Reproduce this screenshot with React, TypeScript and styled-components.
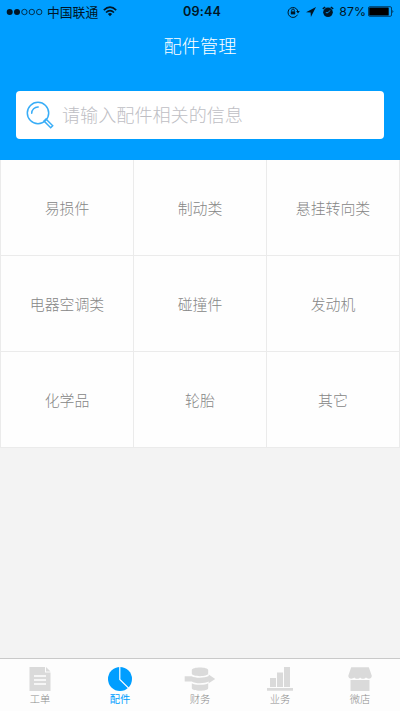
import React from "react";
import styled, { createGlobalStyle } from "styled-components";

const Global = createGlobalStyle`
  * { box-sizing: border-box; }
  body { margin: 0; font-family: "Noto Sans CJK SC", sans-serif; font-weight: 300; }
`;

const Screen = styled.div`
  width: 400px;
  height: 711px;
  display: flex;
  flex-direction: column;
  background: #f3f3f3;
  overflow: hidden;
`;

const Header = styled.header`
  height: 160px;
  flex: none;
  background: #009eff;
`;

const StatusBar = styled.div`
  height: 22px;
  display: grid;
  grid-template-columns: 1fr auto 1fr;
  align-items: center;
  padding: 0 4px 0 6px;
  color: #001626;
  font-size: 13px;
  line-height: 22px;
  svg { display: block; flex: none; }
`;

const StatusGroup = styled.div<{ $end?: boolean }>`
  display: flex;
  align-items: center;
  justify-content: ${(p) => (p.$end ? "flex-end" : "flex-start")};
  height: 22px;
`;

const StatusIcons = styled.div`
  display: flex;
  align-items: center;
  gap: 6px;
`;

const Carrier = styled.span`
  margin: 0 5px 0 4px;
  font-size: 12.8px;
  font-weight: 400;
  white-space: nowrap;
`;

const Clock = styled.span`
  font-family: Inter, sans-serif;
  font-size: 12.6px;
  font-weight: 600;
  letter-spacing: 0.2px;
  margin-left: 2px;
  padding-top: 1px;
`;

const Battery = styled.span`
  font-family: Inter, sans-serif;
  font-size: 12.3px;
  font-weight: 400;
  margin: 0 2px 0 5px;
  padding-top: 1px;
`;

const Title = styled.h1`
  margin: 0;
  height: 48px;
  line-height: 46px;
  text-align: center;
  color: #fff;
  font-size: 18.2px;
  font-weight: 300;
`;

const SearchField = styled.div`
  margin: 21px 16px 0;
  height: 48px;
  display: flex;
  align-items: center;
  padding: 0 0 3px 10px;
  background: #fff;
  border-radius: 4px;
  color: #bebec4;
  font-size: 18.1px;
  svg { display: block; margin: 2px 8px 0 0; }
`;

const Grid = styled.main`
  display: grid;
  grid-template-columns: 134px 133px 133px;
  grid-auto-rows: 96px;
  background: #fefefe;
`;

const Cell = styled.div<{ $first: boolean }>`
  display: flex;
  align-items: center;
  justify-content: center;
  border: solid #ebebeb;
  border-width: 0 1px 1px ${(p) => (p.$first ? "1px" : "0")};
  color: #868686;
  font-size: 14.9px;
  padding-bottom: 1px;
`;

const TabBar = styled.nav`
  margin-top: auto;
  height: 53px;
  display: grid;
  grid-template-columns: repeat(5, 1fr);
  background: #fdfdfd;
  border-top: 1px solid #c9c9c9;
`;

const Tab = styled.div<{ $active?: boolean }>`
  display: flex;
  flex-direction: column;
  align-items: center;
  padding-top: 8px;
  color: ${(p) => (p.$active ? "#009eff" : "#dadada")};
  svg { display: block; }
`;

const TabLabel = styled.span<{ $active?: boolean }>`
  font-size: 10.3px;
  line-height: 13px;
  color: ${(p) => (p.$active ? "#009eff" : "#8c8c8c")};
  font-weight: ${(p) => (p.$active ? 400 : 300)};
`;

const SignalIcon = () => (
  <svg width="37" height="8" viewBox="0 0 37 8" fill="none" stroke="currentColor" strokeWidth="0.8">
    <circle cx="3.7" cy="4" r="3" fill="currentColor" stroke="none" />
    <circle cx="11" cy="4" r="3" fill="currentColor" stroke="none" />
    <circle cx="18.4" cy="4" r="2.7" />
    <circle cx="25.8" cy="4" r="2.7" />
    <circle cx="33.2" cy="4" r="2.7" />
  </svg>
);

const WifiIcon = () => (
  <svg width="14" height="11" viewBox="0 0 14 11" fill="none" stroke="currentColor" strokeWidth="1.7">
    <path d="M.8 4.1Q7-1.7 13.2 4.1" />
    <path d="M3 6.5Q7 2.8 11 6.5" />
    <path d="M4.9 8Q7 6.2 9.1 8L7 10.3Z" fill="currentColor" stroke="none" />
  </svg>
);

const LockIcon = () => (
  <svg width="13" height="12" viewBox="0 0 13 12" fill="none" stroke="currentColor">
    <path d="M10.5 8.7A5 5 0 1 1 10.8 5" />
    <path d="M9.1 5h3.7L11 7.4Z" fill="currentColor" stroke="none" />
    <path d="M3.8 5.4h4.4v3H3.8z" fill="currentColor" stroke="none" />
    <path d="M4.7 5.5V4.3a1.3 1.3 0 0 1 2.6 0v1.2" />
  </svg>
);

const LocationIcon = () => (
  <svg width="10" height="10" viewBox="0 0 10 10" fill="currentColor">
    <path d="M10 0 0 5.2l4.6.3.3 4.5Z" />
  </svg>
);

const AlarmIcon = () => (
  <svg width="12" height="12" viewBox="0 0 12 12" fill="currentColor">
    <path d="M.8 2.8 3.2 1M8.8 1l2.4 1.8" stroke="currentColor" strokeWidth="1.5" />
    <circle cx="6" cy="6.3" r="4.8" />
    <path d="M6 6.7 8 4.4M6 6.7H3.8" stroke="#009eff" strokeWidth="0.9" />
  </svg>
);

const BatteryIcon = () => (
  <svg width="28" height="11" viewBox="0 0 28 11">
    <rect x=".5" y=".7" width="23" height="9.6" rx="1.3" fill="none" stroke="currentColor" strokeWidth=".7" />
    <rect x="1.2" y="1.5" width="19.5" height="8" rx=".5" fill="#000" />
    <path d="M24.5 3.8q1.8 1.7 0 3.4Z" fill="currentColor" />
  </svg>
);

const SearchIcon = () => (
  <svg width="28" height="28" viewBox="0 0 28 28" fill="none" stroke="#38adf7" strokeWidth="1.5">
    <circle cx="12" cy="12" r="10.7" />
    <path d="M5.7 12.3A6.3 6.3 0 0 1 12.2 6" strokeLinecap="round" />
    <path d="m18 20 2-2 6.7 6.7-2 2Z" />
  </svg>
);

const OrderIcon = () => (
  <svg width="22" height="25" viewBox="0 0 22 25">
    <path d="M.5 0H16v5.5h5.5V24H.5Z" fill="currentColor" />
    <path d="M17 0l4.5 4.5H17Z" fill="currentColor" />
    <path d="M5 9h12M5 13h12M5 17h12" stroke="#fff" strokeWidth="1.5" />
  </svg>
);

const PartsIcon = () => (
  <svg width="26" height="25" viewBox="0 0 26 25">
    <circle cx="13" cy="12" r="12" fill="currentColor" />
    <path d="M12.8 0v12.5l8.8 8.6" fill="none" stroke="#fff" strokeWidth="1.2" />
  </svg>
);

const FinanceIcon = () => (
  <svg width="32" height="25" viewBox="0 0 32 25" fill="currentColor">
    <path d="M7.8 3C7.8-.5 24.2-.5 24.2 3v3.5c0 3.5-16.4 3.5-16.4 0Z" />
    <path d="M.7 9.2h7c3.3 2 12.8 2 17-.1V7.4l6.5 4.5-6.5 4.3v-1.7c-4.2 2.2-13.7 2.2-17-.1h-7Z" />
    <path d="M7.8 16.2c3 2.2 13.4 2.2 16.4 0V21c0 3.7-16.4 3.7-16.4 0Z" />
  </svg>
);

const BusinessIcon = () => (
  <svg width="28" height="25" viewBox="0 0 28 25" fill="currentColor">
    <path d="M4 11h6v9H4zM11 5.6h6V20h-6zM18 0h6v20h-6zM1 21h26v2.7H1z" />
  </svg>
);

const ShopIcon = () => (
  <svg width="24" height="25" viewBox="0 0 24 25" fill="currentColor">
    <path d="M3.2.3h17.6L23.8 8.7c0 3.4-4 3.7-5.9 1.8-1.2 1.7-4.6 1.7-5.8 0-1.2 1.7-4.6 1.7-5.8 0C4.4 12.4.3 12.1.3 8.7Z" />
    <path d="M2.5 13h19v11h-19z" />
  </svg>
);

const categories = ["易损件", "制动类", "悬挂转向类", "电器空调类", "碰撞件", "发动机", "化学品", "轮胎", "其它"];

const tabs = [
  { label: "工单", Icon: OrderIcon },
  { label: "配件", Icon: PartsIcon, active: true },
  { label: "财务", Icon: FinanceIcon },
  { label: "业务", Icon: BusinessIcon },
  { label: "微店", Icon: ShopIcon },
];

export default function App() {
  return (
    <Screen>
      <Global />
      <Header>
        <StatusBar>
          <StatusGroup>
            <SignalIcon />
            <Carrier>中国联通</Carrier>
            <WifiIcon />
          </StatusGroup>
          <Clock>09:44</Clock>
          <StatusGroup $end>
            <StatusIcons>
              <LockIcon />
              <LocationIcon />
              <AlarmIcon />
            </StatusIcons>
            <Battery>87%</Battery>
            <BatteryIcon />
          </StatusGroup>
        </StatusBar>
        <Title>配件管理</Title>
        <SearchField>
          <SearchIcon />
          请输入配件相关的信息
        </SearchField>
      </Header>
      <Grid>
        {categories.map((name, i) => (
          <Cell key={name} $first={i % 3 === 0}>{name}</Cell>
        ))}
      </Grid>
      <TabBar>
        {tabs.map(({ label, Icon, active }) => (
          <Tab key={label} $active={active}>
            <Icon />
            <TabLabel $active={active}>{label}</TabLabel>
          </Tab>
        ))}
      </TabBar>
    </Screen>
  );
}
